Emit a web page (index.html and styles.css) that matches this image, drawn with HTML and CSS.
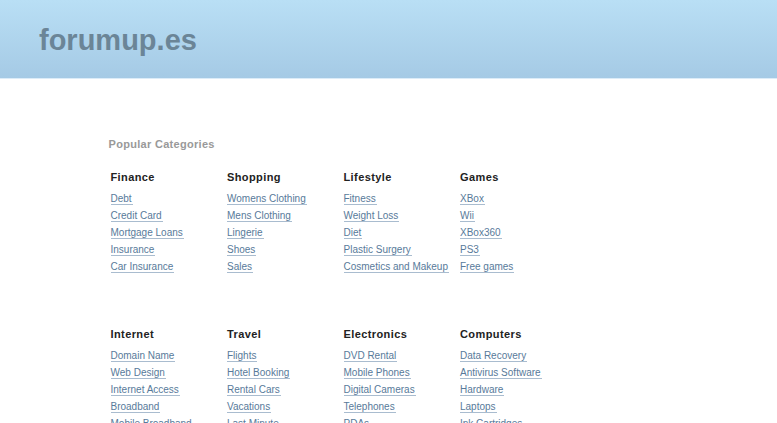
FILE: index.html
```html
<!DOCTYPE html>
<html lang="en">
<head>
  <meta charset="UTF-8">
  <title>forumup.es</title>
  <link rel="stylesheet" href="styles.css">
</head>
<body>
  <header class="top">
    <div class="logo">forumup.es</div>
  </header>

  <div class="container">
    <h2 class="title">Popular Categories</h2>

    <div class="cats">
      <div class="cat">
        <h3>Finance</h3>
        <ul>
          <li><a href="#">Debt</a></li>
          <li><a href="#">Credit Card</a></li>
          <li><a href="#">Mortgage Loans</a></li>
          <li><a href="#">Insurance</a></li>
          <li><a href="#">Car Insurance</a></li>
        </ul>
      </div>
      <div class="cat">
        <h3>Shopping</h3>
        <ul>
          <li><a href="#">Womens Clothing</a></li>
          <li><a href="#">Mens Clothing</a></li>
          <li><a href="#">Lingerie</a></li>
          <li><a href="#">Shoes</a></li>
          <li><a href="#">Sales</a></li>
        </ul>
      </div>
      <div class="cat">
        <h3>Lifestyle</h3>
        <ul>
          <li><a href="#">Fitness</a></li>
          <li><a href="#">Weight Loss</a></li>
          <li><a href="#">Diet</a></li>
          <li><a href="#">Plastic Surgery</a></li>
          <li><a href="#">Cosmetics and Makeup</a></li>
        </ul>
      </div>
      <div class="cat">
        <h3>Games</h3>
        <ul>
          <li><a href="#">XBox</a></li>
          <li><a href="#">Wii</a></li>
          <li><a href="#">XBox360</a></li>
          <li><a href="#">PS3</a></li>
          <li><a href="#">Free games</a></li>
        </ul>
      </div>

      <div class="cat">
        <h3>Internet</h3>
        <ul>
          <li><a href="#">Domain Name</a></li>
          <li><a href="#">Web Design</a></li>
          <li><a href="#">Internet Access</a></li>
          <li><a href="#">Broadband</a></li>
          <li><a href="#">Mobile Broadband</a></li>
        </ul>
      </div>
      <div class="cat">
        <h3>Travel</h3>
        <ul>
          <li><a href="#">Flights</a></li>
          <li><a href="#">Hotel Booking</a></li>
          <li><a href="#">Rental Cars</a></li>
          <li><a href="#">Vacations</a></li>
          <li><a href="#">Last Minute</a></li>
        </ul>
      </div>
      <div class="cat">
        <h3>Electronics</h3>
        <ul>
          <li><a href="#">DVD Rental</a></li>
          <li><a href="#">Mobile Phones</a></li>
          <li><a href="#">Digital Cameras</a></li>
          <li><a href="#">Telephones</a></li>
          <li><a href="#">PDAs</a></li>
        </ul>
      </div>
      <div class="cat">
        <h3>Computers</h3>
        <ul>
          <li><a href="#">Data Recovery</a></li>
          <li><a href="#">Antivirus Software</a></li>
          <li><a href="#">Hardware</a></li>
          <li><a href="#">Laptops</a></li>
          <li><a href="#">Ink Cartridges</a></li>
        </ul>
      </div>
    </div>
  </div>
</body>
</html>
```

FILE: styles.css
```css
body {
  margin: 0;
  padding: 0;
  background: #fff;
  font-family: "Liberation Sans", Arial, sans-serif;
}

.top {
  height: 78px;
  background: linear-gradient(to bottom, #b9dff5, #a5cae5);
  border-bottom: 1px solid #dcecf8;
}

.logo {
  padding: 23px 0 0 39px;
  font-size: 29px;
  font-weight: bold;
  line-height: 34px;
  color: #6b8597;
}

.container {
  width: 560px;
  margin: 0 auto;
  padding-top: 59px;
}

.title {
  margin: 0;
  font-size: 11px;
  line-height: 13px;
  font-weight: bold;
  letter-spacing: 0.3px;
  color: #999;
}

.cats {
  display: grid;
  grid-template-columns: repeat(4, 116.5px);
  row-gap: 53px;
  padding: 20px 0 0 2px;
}

.cat h3 {
  margin: 0 0 6px;
  font-size: 11px;
  line-height: 13px;
  font-weight: bold;
  letter-spacing: 0.4px;
  color: #222;
}

.cat ul {
  list-style: none;
  margin: 0;
  padding: 0;
}

.cat li {
  font-size: 10px;
  line-height: 17px;
}

.cat a {
  color: #587a9a;
  text-decoration: none;
  border-bottom: 1px solid #a9bccf;
  padding: 0 1px 0 0;
}
```
